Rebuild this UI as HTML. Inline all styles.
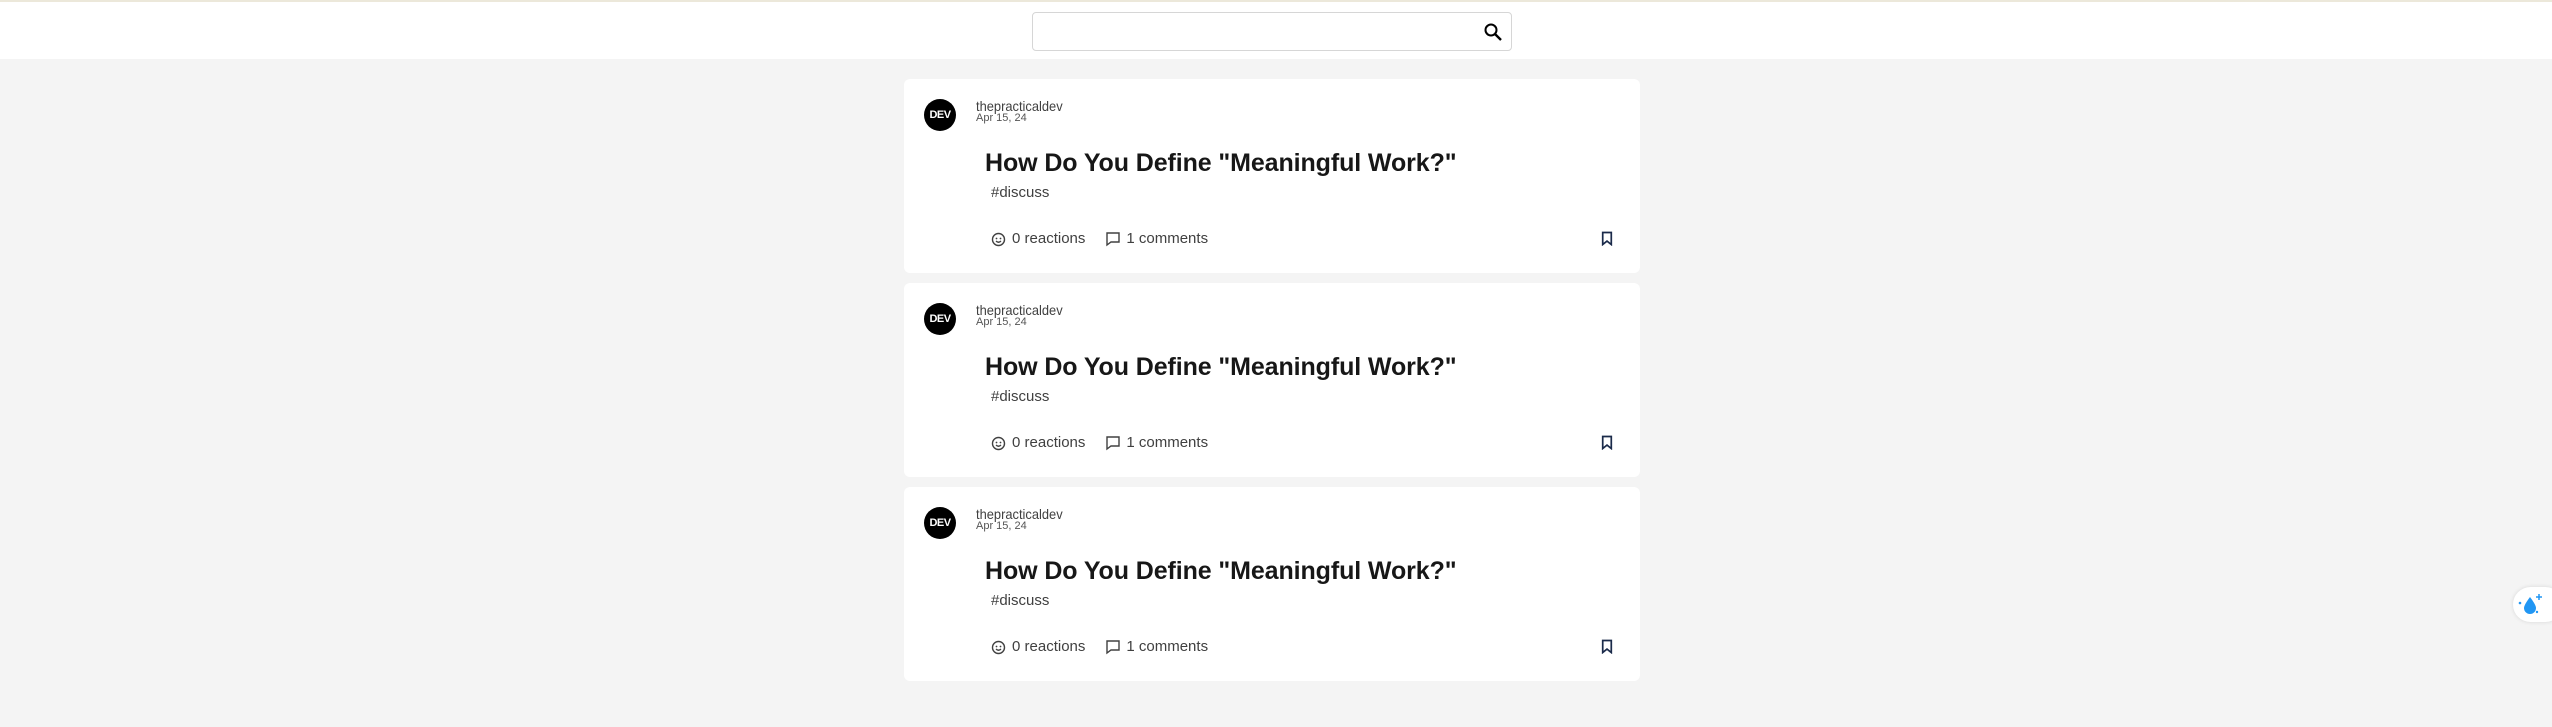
<!DOCTYPE html>
<html><head><meta charset="utf-8"><style>
*{margin:0;padding:0;box-sizing:border-box}
body{width:2552px;height:727px;background:#f4f4f4;font-family:"Liberation Sans",sans-serif;position:relative;overflow:hidden}
.top{position:absolute;left:0;top:0;width:2552px;height:59px;background:#fff;border-top:2px solid #ece8da}
.search{position:absolute;left:1032px;top:10px;width:480px;height:39px;border:1px solid #d6d6d6;border-radius:4px;background:#fff}
.card{position:absolute;left:904px;width:736px;height:194px;background:#fff;border-radius:6px}
.av{position:absolute;left:20px;top:20px;width:32px;height:32px;border-radius:50%;background:#000;color:#fff;font-size:11px;font-weight:bold;text-align:center;line-height:32px;letter-spacing:-0.5px}
.user{position:absolute;left:72px;top:20px;font-size:14px;color:#404040;line-height:14px;transform:scaleX(.92);transform-origin:left}
.date{position:absolute;left:72px;top:33px;font-size:11px;color:#555;line-height:12px}
.title{position:absolute;left:81px;top:70px;font-size:25px;font-weight:bold;color:#171717;letter-spacing:-0.1px}
.tag{position:absolute;left:87px;top:105px;font-size:15px;color:#404040}
.row{position:absolute;left:87px;top:151px;font-size:15px;color:#404040;display:flex;align-items:center}
.row svg{margin-right:5px}
.bm{position:absolute;left:697px;top:152px}
</style></head><body>
<div class="top"><div class="search"><svg style="position:absolute;left:450px;top:9px" width="20" height="20" viewBox="0 0 20 20"><circle cx="8" cy="8" r="5.5" fill="none" stroke="#000" stroke-width="2"/><path d="M12 12l6 6" stroke="#000" stroke-width="2.4"/></svg></div></div>

<div class="card" style="top:79px">
<div class="av">DEV</div><div class="user">thepracticaldev</div><div class="date">Apr 15, 24</div>
<div class="title">How Do You Define "Meaningful Work?"</div><div class="tag">#discuss</div>
<div class="row"><svg width="16" height="16" viewBox="0 0 16 16"><circle cx="7.5" cy="8.5" r="6" fill="none" stroke="#404040" stroke-width="1.4"/><circle cx="5.5" cy="7.5" r=".9" fill="#404040"/><circle cx="9.5" cy="7.5" r=".9" fill="#404040"/><path d="M5 10q2.5 2.5 5 0" fill="none" stroke="#404040" stroke-width="1.3"/></svg>0 reactions<svg style="margin-left:20px" width="16" height="16" viewBox="0 0 16 16"><path d="M2 2h12v9H6l-4 3z" fill="none" stroke="#404040" stroke-width="1.4"/></svg>1 comments</div>
<svg class="bm" width="12" height="15" viewBox="0 0 14 16"><path d="M2 1h10v14l-5-4-5 4z" fill="none" stroke="#1a2a4a" stroke-width="2"/></svg>
</div>

<div class="card" style="top:283px">
<div class="av">DEV</div><div class="user">thepracticaldev</div><div class="date">Apr 15, 24</div>
<div class="title">How Do You Define "Meaningful Work?"</div><div class="tag">#discuss</div>
<div class="row"><svg width="16" height="16" viewBox="0 0 16 16"><circle cx="7.5" cy="8.5" r="6" fill="none" stroke="#404040" stroke-width="1.4"/><circle cx="5.5" cy="7.5" r=".9" fill="#404040"/><circle cx="9.5" cy="7.5" r=".9" fill="#404040"/><path d="M5 10q2.5 2.5 5 0" fill="none" stroke="#404040" stroke-width="1.3"/></svg>0 reactions<svg style="margin-left:20px" width="16" height="16" viewBox="0 0 16 16"><path d="M2 2h12v9H6l-4 3z" fill="none" stroke="#404040" stroke-width="1.4"/></svg>1 comments</div>
<svg class="bm" width="12" height="15" viewBox="0 0 14 16"><path d="M2 1h10v14l-5-4-5 4z" fill="none" stroke="#1a2a4a" stroke-width="2"/></svg>
</div>

<div class="card" style="top:487px">
<div class="av">DEV</div><div class="user">thepracticaldev</div><div class="date">Apr 15, 24</div>
<div class="title">How Do You Define "Meaningful Work?"</div><div class="tag">#discuss</div>
<div class="row"><svg width="16" height="16" viewBox="0 0 16 16"><circle cx="7.5" cy="8.5" r="6" fill="none" stroke="#404040" stroke-width="1.4"/><circle cx="5.5" cy="7.5" r=".9" fill="#404040"/><circle cx="9.5" cy="7.5" r=".9" fill="#404040"/><path d="M5 10q2.5 2.5 5 0" fill="none" stroke="#404040" stroke-width="1.3"/></svg>0 reactions<svg style="margin-left:20px" width="16" height="16" viewBox="0 0 16 16"><path d="M2 2h12v9H6l-4 3z" fill="none" stroke="#404040" stroke-width="1.4"/></svg>1 comments</div>
<svg class="bm" width="12" height="15" viewBox="0 0 14 16"><path d="M2 1h10v14l-5-4-5 4z" fill="none" stroke="#1a2a4a" stroke-width="2"/></svg>
</div>

<div style="position:absolute;left:2513px;top:587px;width:50px;height:35px;background:#fff;border-radius:18px;box-shadow:0 0 4px rgba(0,0,0,.12)">
<svg style="position:absolute;left:4px;top:5px" width="28" height="25" viewBox="0 0 28 25"><path d="M13 5q-6 8-6 11a6 6 0 0 0 12 0q0-3-6-11z" fill="#2196f3"/><path d="M22 2v6M19 5h6" stroke="#2196f3" stroke-width="1.5"/><circle cx="3" cy="11" r="1.3" fill="#2196f3"/><circle cx="20" cy="20" r="1.2" fill="#2196f3"/></svg></div>
</body></html>
